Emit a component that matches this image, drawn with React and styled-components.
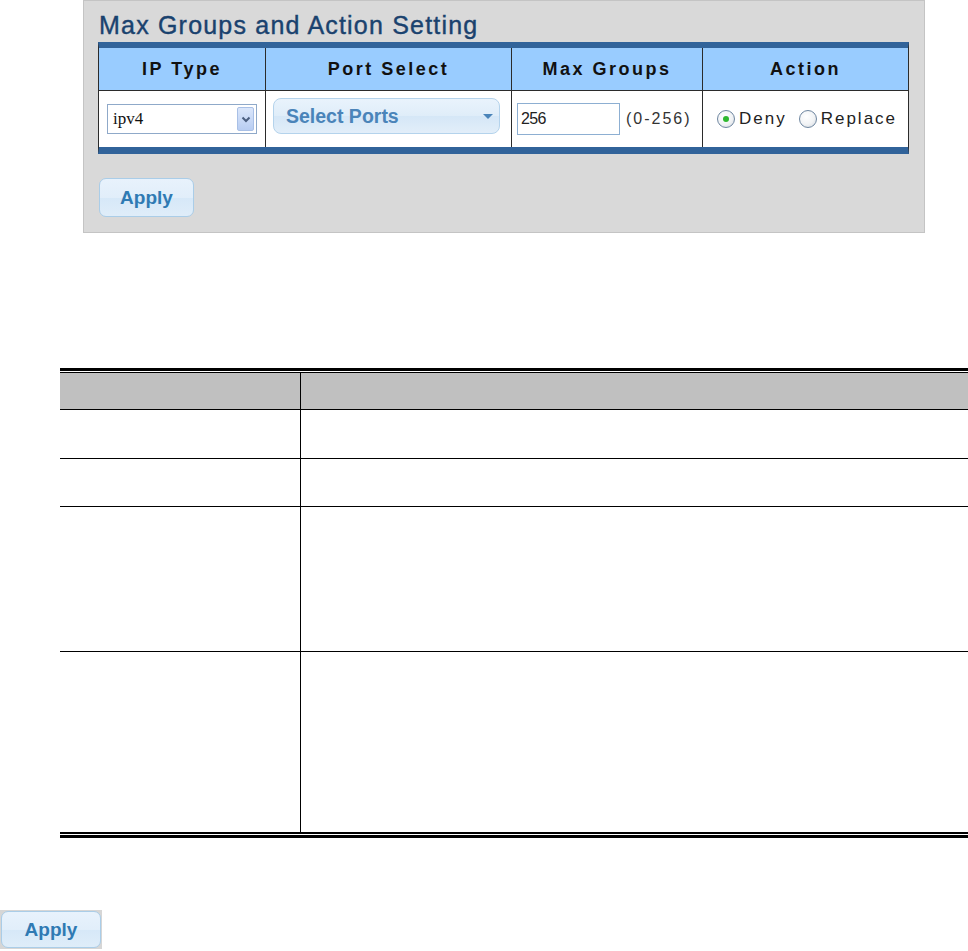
import React from "react";
import styled, { createGlobalStyle } from "styled-components";

const GlobalStyle = createGlobalStyle`
  body {
    margin: 0;
    background: #fff;
    overflow-x: hidden;
    font-family: "Liberation Sans", Arial, sans-serif;
  }
`;

const Page = styled.div`
  width: 968px;
  overflow: hidden;
`;

const Panel = styled.section`
  box-sizing: border-box;
  margin-left: 83px;
  width: 842px;
  height: 233px;
  padding: 10px 14px 0 14px;
  background: #d9d9d9;
  border: 1px solid #c4c4c4;
`;

const Title = styled.h2`
  margin: 0 0 3px 1px;
  font-size: 25px;
  line-height: 28px;
  font-weight: normal;
  letter-spacing: 1.2px;
  color: #1a426e;
  -webkit-text-stroke: 0.4px #1a426e;
`;

const SettingTable = styled.div`
  display: grid;
  grid-template-columns: 167px 246px 191px 205px;
  width: 811px;
  box-sizing: border-box;
  border-top: 6px solid #31639a;
  border-bottom: 7px solid #31639a;
  border-left: 1px solid #2b2b2b;
  border-right: 1px solid #2b2b2b;
`;

const HeadCell = styled.div`
  box-sizing: border-box;
  height: 43px;
  display: flex;
  align-items: center;
  justify-content: center;
  background: #99ccff;
  border-bottom: 1px solid #2b2b2b;
  border-right: ${(p) => (p.$last ? "none" : "1px solid #2b2b2b")};
  font-size: 18px;
  font-weight: bold;
  letter-spacing: 2.5px;
  color: #111;
`;

const BodyCell = styled.div`
  box-sizing: border-box;
  height: 56px;
  display: flex;
  align-items: center;
  gap: ${(p) => p.$gap || 0}px;
  padding-left: ${(p) => p.$pad || 0}px;
  background: #fff;
  border-right: ${(p) => (p.$last ? "none" : "1px solid #2b2b2b")};
`;

const NativeSelect = styled.div`
  box-sizing: border-box;
  width: 150px;
  height: 30px;
  display: flex;
  align-items: center;
  justify-content: space-between;
  padding: 0 2px 0 5px;
  background: #fff;
  border: 1px solid #8fa9c9;
  font-family: "Liberation Serif", "Times New Roman", serif;
  font-size: 17px;
  color: #111;
`;

const SelectArrow = styled.span`
  box-sizing: border-box;
  width: 17px;
  height: 24px;
  display: flex;
  align-items: center;
  justify-content: center;
  border: 1px solid #a9c0e6;
  border-radius: 2px;
  background: linear-gradient(#dbe7fb, #b8cdf2);
`;

const PortSelect = styled.div`
  box-sizing: border-box;
  width: 227px;
  height: 36px;
  margin-top: -6px;
  display: flex;
  align-items: center;
  justify-content: space-between;
  padding: 0 6px 0 12px;
  border: 1px solid #b4d3ec;
  border-radius: 8px;
  background: linear-gradient(#e9f3fc 0%, #dfedf9 50%, #d5e7f7 51%, #e2eef9 100%);
  font-size: 19.5px;
  font-weight: bold;
  color: #4a84b9;
`;

const Caret = styled.span`
  width: 0;
  height: 0;
  border-left: 5px solid transparent;
  border-right: 5px solid transparent;
  border-top: 5px solid #4a84b9;
`;

const NumberInput = styled.div`
  box-sizing: border-box;
  width: 103px;
  height: 32px;
  display: flex;
  align-items: center;
  padding-left: 3px;
  border: 1px solid #8dafd2;
  background: #fff;
  font-size: 16px;
  letter-spacing: -0.6px;
  color: #222;
`;

const Hint = styled.span`
  font-size: 16px;
  letter-spacing: 2px;
  color: #333;
`;

const RadioLabel = styled.label`
  display: flex;
  align-items: center;
  gap: 4px;
  font-size: 17px;
  letter-spacing: 2px;
  color: #222;
`;

const RadioDot = styled.span`
  box-sizing: border-box;
  width: 18px;
  height: 18px;
  border-radius: 50%;
  border: 1px solid #6e86a0;
  background: radial-gradient(circle at 40% 35%, #ffffff 0%, #f1f3f5 55%, #cfd5dc 100%);
  display: flex;
  align-items: center;
  justify-content: center;

  &::after {
    content: "";
    width: 6px;
    height: 6px;
    border-radius: 50%;
    background: ${(p) => (p.$checked ? "#2fb82f" : "transparent")};
  }
`;

const ButtonFrame = styled.span`
  display: inline-block;
  padding: 1px;
  background: ${(p) => p.$bg || "transparent"};
`;

const ApplyButton = styled.button`
  box-sizing: border-box;
  width: ${(p) => p.$w || 95}px;
  height: ${(p) => p.$h || 39}px;
  padding: 0;
  border: 1px solid #aacde8;
  border-radius: 7px;
  background: linear-gradient(#e8f2fc 0%, #e1eefa 50%, #d6e8f8 51%, #dfedf9 100%);
  font-family: "Liberation Sans", Arial, sans-serif;
  font-size: 19px;
  font-weight: bold;
  color: #2f7ab3;
  cursor: pointer;
`;

const PanelActions = styled.div`
  margin-top: 24px;
  margin-left: 1px;
`;

const DescTable = styled.div`
  margin: 135px 0 0 60px;
  width: 920px;
`;

const DoubleRule = styled.div`
  height: ${(p) => (p.$bottom ? 6 : 5)}px;
  box-sizing: border-box;
  border-top: ${(p) => (p.$bottom ? "2px" : "3px")} solid #000;
  border-bottom: ${(p) => (p.$bottom ? "3px" : "1px")} solid #000;
`;

const DescRow = styled.div`
  display: grid;
  grid-template-columns: 241px 1fr;
  height: ${(p) => p.$h}px;
  background: ${(p) => (p.$head ? "#c0c0c0" : "#fff")};
  border-bottom: ${(p) => (p.$noLine ? "none" : "1px solid #000")};
`;

const DescCell = styled.div`
  border-right: ${(p) => (p.$first ? "1px solid #000" : "none")};
`;

const BottomActions = styled.div`
  margin: 72px 0 0 0;
`;

const heads = ["IP Type", "Port Select", "Max Groups", "Action"];
const descRows = [
  { h: 36, head: true },
  { h: 48 },
  { h: 47 },
  { h: 144 },
  { h: 180, noLine: true },
];

const Chevron = () => (
  <svg width="10" height="7" viewBox="0 0 10 7">
    <polyline points="1.5,1.5 5,5 8.5,1.5" fill="none" stroke="#4b5f80" strokeWidth="2" />
  </svg>
);

const App = () => {
  return (
    <Page>
      <GlobalStyle />
      <Panel>
        <Title>Max Groups and Action Setting</Title>
        <SettingTable>
          {heads.map((h, i) => (
            <HeadCell key={h} $last={i === heads.length - 1}>{h}</HeadCell>
          ))}
          <BodyCell $pad={8}>
            <NativeSelect>
              ipv4
              <SelectArrow><Chevron /></SelectArrow>
            </NativeSelect>
          </BodyCell>
          <BodyCell $pad={7}>
            <PortSelect>
              Select Ports
              <Caret />
            </PortSelect>
          </BodyCell>
          <BodyCell $pad={5} $gap={6}>
            <NumberInput>256</NumberInput>
            <Hint>(0-256)</Hint>
          </BodyCell>
          <BodyCell $pad={14} $gap={12} $last>
            <RadioLabel><RadioDot $checked />Deny</RadioLabel>
            <RadioLabel><RadioDot />Replace</RadioLabel>
          </BodyCell>
        </SettingTable>
        <PanelActions>
          <ApplyButton>Apply</ApplyButton>
        </PanelActions>
      </Panel>

      <DescTable>
        <DoubleRule />
        {descRows.map((r, i) => (
          <DescRow key={i} $h={r.h} $head={r.head} $noLine={r.noLine}>
            <DescCell $first />
            <DescCell />
          </DescRow>
        ))}
        <DoubleRule $bottom />
      </DescTable>

      <BottomActions>
        <ButtonFrame $bg="#d6d6d6">
          <ApplyButton $w={100} $h={37}>Apply</ApplyButton>
        </ButtonFrame>
      </BottomActions>
    </Page>
  );
};

export default App;
